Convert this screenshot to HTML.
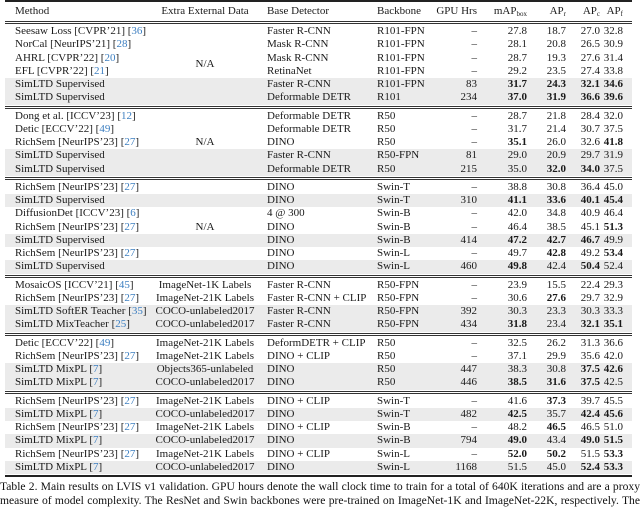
<!DOCTYPE html>
<html><head><meta charset="utf-8"><style>
*{margin:0;padding:0;box-sizing:border-box}
body{width:640px;height:500px;overflow:hidden;background:#fff;font-family:"Liberation Serif",serif;font-size:11px;color:#1a1a1a}
.t{position:absolute;left:5px;width:627px;top:0}
.top{height:1.6px;background:#222}
.h{position:relative;height:19.5px;line-height:19px}
.dbl{height:3px;border-top:1px solid #333;border-bottom:1px solid #333}
.p{height:1px}
.r{position:relative;height:13.25px;line-height:13.25px;white-space:nowrap}
.g{background:#ebebeb}
.r span,.h span{position:absolute;top:0}
.a{left:10px}.e{left:140px;width:120px;text-align:center}.d{left:262px}.k{left:372px}
.u{right:155px}.m{right:105px}.x{right:66px}.c{right:32px}.f{right:9px}
i{font-style:normal;color:#3d7fc1}
.na{position:absolute;left:140px;width:120px;text-align:center;line-height:13px}
sub{font-size:7px;vertical-align:-2px;line-height:0}
.bot{height:1.6px;background:#222}
.cap{position:absolute;left:0;top:480px;width:640px;font-size:11.6px;line-height:13.5px;text-align:justify;text-align-last:justify;color:#111}
</style></head><body>
<div class="t">
<div class="top"></div>
<div class="h"><span class="a">Method</span><span class="e">Extra External Data</span><span class="d">Base Detector</span><span class="k">Backbone</span><span class="u">GPU Hrs</span><span class="m">mAP<sub>box</sub></span><span class="x">AP<sub>r</sub></span><span class="c">AP<sub>c</sub></span><span class="f">AP<sub>f</sub></span></div>
<div class="dbl"></div><div class="p"></div>
<div style="position:relative">
<div class="na" style="top:33px">N/A</div>
<div class="r"><span class="a">Seesaw Loss [CVPR’21] [<i>36</i>]</span><span class="d">Faster R-CNN</span><span class="k">R101-FPN</span><span class="u">–</span><span class="m">27.8</span><span class="x">18.7</span><span class="c">27.0</span><span class="f">32.8</span></div>
<div class="r"><span class="a">NorCal [NeurIPS’21] [<i>28</i>]</span><span class="d">Mask R-CNN</span><span class="k">R101-FPN</span><span class="u">–</span><span class="m">28.1</span><span class="x">20.8</span><span class="c">26.5</span><span class="f">30.9</span></div>
<div class="r"><span class="a">AHRL [CVPR’22] [<i>20</i>]</span><span class="d">Mask R-CNN</span><span class="k">R101-FPN</span><span class="u">–</span><span class="m">28.7</span><span class="x">19.3</span><span class="c">27.6</span><span class="f">31.4</span></div>
<div class="r"><span class="a">EFL [CVPR’22] [<i>21</i>]</span><span class="d">RetinaNet</span><span class="k">R101-FPN</span><span class="u">–</span><span class="m">29.2</span><span class="x">23.5</span><span class="c">27.4</span><span class="f">33.8</span></div>
<div class="r g"><span class="a">SimLTD Supervised</span><span class="d">Faster R-CNN</span><span class="k">R101-FPN</span><span class="u">83</span><span class="m"><b>31.7</b></span><span class="x"><b>24.3</b></span><span class="c"><b>32.1</b></span><span class="f"><b>34.6</b></span></div>
<div class="r g"><span class="a">SimLTD Supervised</span><span class="d">Deformable DETR</span><span class="k">R101</span><span class="u">234</span><span class="m"><b>37.0</b></span><span class="x"><b>31.9</b></span><span class="c"><b>36.6</b></span><span class="f"><b>39.6</b></span></div>
</div>
<div class="p"></div><div class="dbl"></div><div class="p"></div>
<div style="position:relative">
<div class="na" style="top:26.5px">N/A</div>
<div class="r"><span class="a">Dong et al. [ICCV’23] [<i>12</i>]</span><span class="d">Deformable DETR</span><span class="k">R50</span><span class="u">–</span><span class="m">28.7</span><span class="x">21.8</span><span class="c">28.4</span><span class="f">32.0</span></div>
<div class="r"><span class="a">Detic [ECCV’22] [<i>49</i>]</span><span class="d">Deformable DETR</span><span class="k">R50</span><span class="u">–</span><span class="m">31.7</span><span class="x">21.4</span><span class="c">30.7</span><span class="f">37.5</span></div>
<div class="r"><span class="a">RichSem [NeurIPS’23] [<i>27</i>]</span><span class="d">DINO</span><span class="k">R50</span><span class="u">–</span><span class="m"><b>35.1</b></span><span class="x">26.0</span><span class="c">32.6</span><span class="f"><b>41.8</b></span></div>
<div class="r g"><span class="a">SimLTD Supervised</span><span class="d">Faster R-CNN</span><span class="k">R50-FPN</span><span class="u">81</span><span class="m">29.0</span><span class="x">20.9</span><span class="c">29.7</span><span class="f">31.9</span></div>
<div class="r g"><span class="a">SimLTD Supervised</span><span class="d">Deformable DETR</span><span class="k">R50</span><span class="u">215</span><span class="m">35.0</span><span class="x"><b>32.0</b></span><span class="c"><b>34.0</b></span><span class="f">37.5</span></div>
</div>
<div class="p"></div><div class="dbl"></div><div class="p"></div>
<div style="position:relative">
<div class="na" style="top:39.7px">N/A</div>
<div class="r"><span class="a">RichSem [NeurIPS’23] [<i>27</i>]</span><span class="d">DINO</span><span class="k">Swin-T</span><span class="u">–</span><span class="m">38.8</span><span class="x">30.8</span><span class="c">36.4</span><span class="f">45.0</span></div>
<div class="r g"><span class="a">SimLTD Supervised</span><span class="d">DINO</span><span class="k">Swin-T</span><span class="u">310</span><span class="m"><b>41.1</b></span><span class="x"><b>33.6</b></span><span class="c"><b>40.1</b></span><span class="f"><b>45.4</b></span></div>
<div class="r"><span class="a">DiffusionDet [ICCV’23] [<i>6</i>]</span><span class="d">4 @ 300</span><span class="k">Swin-B</span><span class="u">–</span><span class="m">42.0</span><span class="x">34.8</span><span class="c">40.9</span><span class="f">46.4</span></div>
<div class="r"><span class="a">RichSem [NeurIPS’23] [<i>27</i>]</span><span class="d">DINO</span><span class="k">Swin-B</span><span class="u">–</span><span class="m">46.4</span><span class="x">38.5</span><span class="c">45.1</span><span class="f"><b>51.3</b></span></div>
<div class="r g"><span class="a">SimLTD Supervised</span><span class="d">DINO</span><span class="k">Swin-B</span><span class="u">414</span><span class="m"><b>47.2</b></span><span class="x"><b>42.7</b></span><span class="c"><b>46.7</b></span><span class="f">49.9</span></div>
<div class="r"><span class="a">RichSem [NeurIPS’23] [<i>27</i>]</span><span class="d">DINO</span><span class="k">Swin-L</span><span class="u">–</span><span class="m">49.7</span><span class="x"><b>42.8</b></span><span class="c">49.2</span><span class="f"><b>53.4</b></span></div>
<div class="r g"><span class="a">SimLTD Supervised</span><span class="d">DINO</span><span class="k">Swin-L</span><span class="u">460</span><span class="m"><b>49.8</b></span><span class="x">42.4</span><span class="c"><b>50.4</b></span><span class="f">52.4</span></div>
</div>
<div class="p"></div><div class="dbl"></div><div class="p"></div>
<div class="r"><span class="a">MosaicOS [ICCV’21] [<i>45</i>]</span><span class="e">ImageNet-1K Labels</span><span class="d">Faster R-CNN</span><span class="k">R50-FPN</span><span class="u">–</span><span class="m">23.9</span><span class="x">15.5</span><span class="c">22.4</span><span class="f">29.3</span></div>
<div class="r"><span class="a">RichSem [NeurIPS’23] [<i>27</i>]</span><span class="e">ImageNet-21K Labels</span><span class="d">Faster R-CNN + CLIP</span><span class="k">R50-FPN</span><span class="u">–</span><span class="m">30.6</span><span class="x"><b>27.6</b></span><span class="c">29.7</span><span class="f">32.9</span></div>
<div class="r g"><span class="a">SimLTD SoftER Teacher [<i>35</i>]</span><span class="e">COCO-unlabeled2017</span><span class="d">Faster R-CNN</span><span class="k">R50-FPN</span><span class="u">392</span><span class="m">30.3</span><span class="x">23.3</span><span class="c">30.3</span><span class="f">33.3</span></div>
<div class="r g"><span class="a">SimLTD MixTeacher [<i>25</i>]</span><span class="e">COCO-unlabeled2017</span><span class="d">Faster R-CNN</span><span class="k">R50-FPN</span><span class="u">434</span><span class="m"><b>31.8</b></span><span class="x">23.4</span><span class="c"><b>32.1</b></span><span class="f"><b>35.1</b></span></div>
<div class="p"></div><div class="dbl"></div><div class="p"></div>
<div class="r"><span class="a">Detic [ECCV’22] [<i>49</i>]</span><span class="e">ImageNet-21K Labels</span><span class="d">DeformDETR + CLIP</span><span class="k">R50</span><span class="u">–</span><span class="m">32.5</span><span class="x">26.2</span><span class="c">31.3</span><span class="f">36.6</span></div>
<div class="r"><span class="a">RichSem [NeurIPS’23] [<i>27</i>]</span><span class="e">ImageNet-21K Labels</span><span class="d">DINO + CLIP</span><span class="k">R50</span><span class="u">–</span><span class="m">37.1</span><span class="x">29.9</span><span class="c">35.6</span><span class="f">42.0</span></div>
<div class="r g"><span class="a">SimLTD MixPL [<i>7</i>]</span><span class="e">Objects365-unlabeled</span><span class="d">DINO</span><span class="k">R50</span><span class="u">447</span><span class="m">38.3</span><span class="x">30.8</span><span class="c"><b>37.5</b></span><span class="f"><b>42.6</b></span></div>
<div class="r g"><span class="a">SimLTD MixPL [<i>7</i>]</span><span class="e">COCO-unlabeled2017</span><span class="d">DINO</span><span class="k">R50</span><span class="u">446</span><span class="m"><b>38.5</b></span><span class="x"><b>31.6</b></span><span class="c"><b>37.5</b></span><span class="f">42.5</span></div>
<div class="p"></div><div class="dbl"></div><div class="p"></div>
<div class="r"><span class="a">RichSem [NeurIPS’23] [<i>27</i>]</span><span class="e">ImageNet-21K Labels</span><span class="d">DINO + CLIP</span><span class="k">Swin-T</span><span class="u">–</span><span class="m">41.6</span><span class="x"><b>37.3</b></span><span class="c">39.7</span><span class="f">45.5</span></div>
<div class="r g"><span class="a">SimLTD MixPL [<i>7</i>]</span><span class="e">COCO-unlabeled2017</span><span class="d">DINO</span><span class="k">Swin-T</span><span class="u">482</span><span class="m"><b>42.5</b></span><span class="x">35.7</span><span class="c"><b>42.4</b></span><span class="f"><b>45.6</b></span></div>
<div class="r"><span class="a">RichSem [NeurIPS’23] [<i>27</i>]</span><span class="e">ImageNet-21K Labels</span><span class="d">DINO + CLIP</span><span class="k">Swin-B</span><span class="u">–</span><span class="m">48.2</span><span class="x"><b>46.5</b></span><span class="c">46.5</span><span class="f">51.0</span></div>
<div class="r g"><span class="a">SimLTD MixPL [<i>7</i>]</span><span class="e">COCO-unlabeled2017</span><span class="d">DINO</span><span class="k">Swin-B</span><span class="u">794</span><span class="m"><b>49.0</b></span><span class="x">43.4</span><span class="c"><b>49.0</b></span><span class="f"><b>51.5</b></span></div>
<div class="r"><span class="a">RichSem [NeurIPS’23] [<i>27</i>]</span><span class="e">ImageNet-21K Labels</span><span class="d">DINO + CLIP</span><span class="k">Swin-L</span><span class="u">–</span><span class="m"><b>52.0</b></span><span class="x"><b>50.2</b></span><span class="c">51.5</span><span class="f"><b>53.3</b></span></div>
<div class="r g"><span class="a">SimLTD MixPL [<i>7</i>]</span><span class="e">COCO-unlabeled2017</span><span class="d">DINO</span><span class="k">Swin-L</span><span class="u">1168</span><span class="m">51.5</span><span class="x">45.0</span><span class="c"><b>52.4</b></span><span class="f"><b>53.3</b></span></div>
<div class="p"></div>
<div class="bot"></div>
</div>
<div class="cap">Table 2. Main results on LVIS v1 validation. GPU hours denote the wall clock time to train for a total of 640K iterations and are a proxy<br>measure of model complexity. The ResNet and Swin backbones were pre-trained on ImageNet-1K and ImageNet-22K, respectively. The</div>
</body></html>
